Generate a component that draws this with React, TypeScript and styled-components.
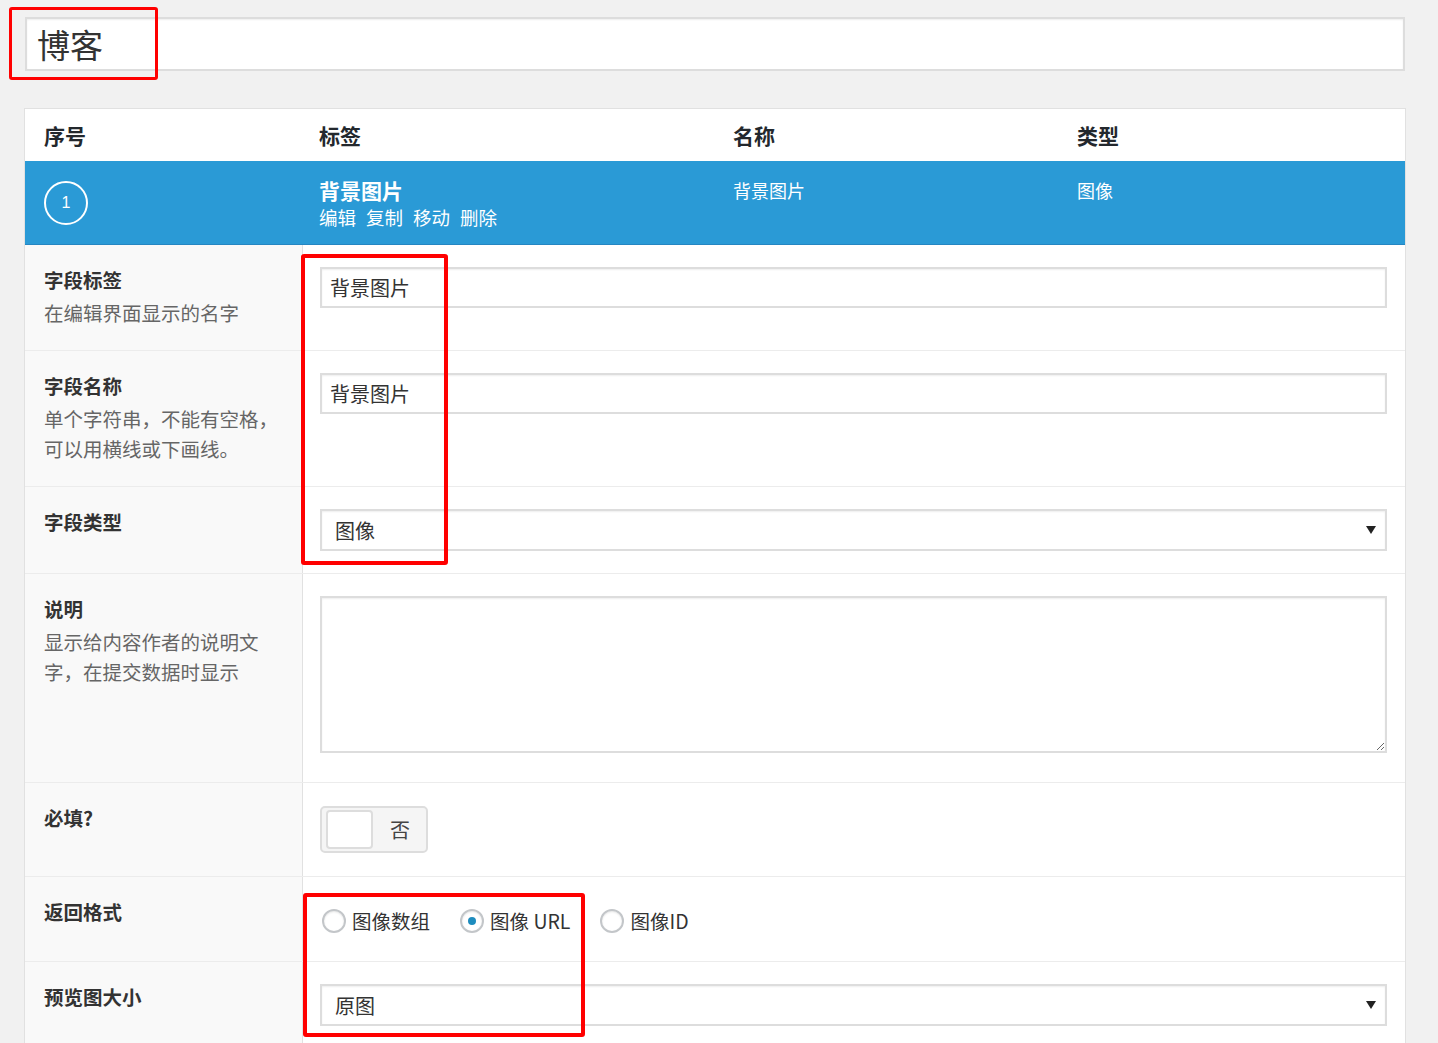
import React from 'react';
import styled, { createGlobalStyle } from 'styled-components';

interface FieldRowData {
	label: string;
	desc?: string[];
	control: React.ReactNode;
}

const GlobalStyle = createGlobalStyle`
	body {
		margin: 0;
		background: #f1f1f1;
		font-family: "Noto Sans CJK SC", "Noto Sans", sans-serif;
		color: #333;
	}
	* { box-sizing: border-box; }
`;

const Arrow = () => (
	<svg width="10" height="8" viewBox="0 0 10 8">
		<polygon points="0,0 10,0 5,8" fill="#222" />
	</svg>
);

const RadioOption: React.FC<{ label: string; checked?: boolean }> = ({ label, checked }) => (
	<RadioItem>
		<RadioCircle $checked={checked} />
		<span>{label}</span>
	</RadioItem>
);

const App: React.FC = () => {
	const rows: FieldRowData[] = [
		{
			label: '字段标签',
			desc: ['在编辑界面显示的名字'],
			control: <TextInput defaultValue="背景图片" />,
		},
		{
			label: '字段名称',
			desc: ['单个字符串，不能有空格，', '可以用横线或下画线。'],
			control: <TextInput defaultValue="背景图片" />,
		},
		{
			label: '字段类型',
			control: (
				<SelectBox>
					<span>图像</span>
					<Arrow />
				</SelectBox>
			),
		},
		{
			label: '说明',
			desc: ['显示给内容作者的说明文', '字，在提交数据时显示'],
			control: <TextArea />,
		},
		{
			label: '必填?',
			control: (
				<Toggle>
					<ToggleKnob />
					<ToggleText>否</ToggleText>
				</Toggle>
			),
		},
		{
			label: '返回格式',
			control: (
				<RadioList>
					<RadioOption label="图像数组" />
					<RadioOption label="图像 URL" checked />
					<RadioOption label="图像ID" />
				</RadioList>
			),
		},
		{
			label: '预览图大小',
			control: (
				<SelectBox>
					<span>原图</span>
					<Arrow />
				</SelectBox>
			),
		},
	];

	return (
		<Page>
			<GlobalStyle />
			<TitleBox>博客</TitleBox>
			<Table>
				<HeaderRow>
					<div>序号</div>
					<div>标签</div>
					<div>名称</div>
					<div>类型</div>
				</HeaderRow>
				<ActiveRow>
					<OrderCircle>1</OrderCircle>
					<div>
						<FieldTitle>背景图片</FieldTitle>
						<Actions>
							<span>编辑</span>
							<span>复制</span>
							<span>移动</span>
							<span>删除</span>
						</Actions>
					</div>
					<CellText>背景图片</CellText>
					<CellText>图像</CellText>
				</ActiveRow>
				{rows.map((row, i) => (
					<FieldRow key={i}>
						<LabelCell>
							<LabelTitle>{row.label}</LabelTitle>
							{row.desc && (
								<LabelDesc>
									{row.desc.map((line, j) => (
										<div key={j}>{line}</div>
									))}
								</LabelDesc>
							)}
						</LabelCell>
						<ValueCell>{row.control}</ValueCell>
					</FieldRow>
				))}
			</Table>
			<Highlight $left={9} $top={7} $width={149} $height={73} $border={3} />
			<Highlight $left={301} $top={254} $width={147} $height={311} $border={4} />
			<Highlight $left={303} $top={893} $width={282} $height={144} $border={4} />
		</Page>
	);
};

const Page = styled.div`
	position: relative;
	padding: 17px 32px 40px 24px;
`;

const TitleBox = styled.div`
	margin: 0 1px;
	height: 54px;
	display: flex;
	align-items: center;
	padding-left: 10px;
	background: #fff;
	border: 2px solid #ddd;
	box-shadow: inset 0 1px 2px rgba(0, 0, 0, 0.07);
	font-size: 33px;
	color: #333;
`;

const Table = styled.div`
	margin-top: 37px;
	background: #fff;
	border: 1px solid #e1e1e1;
`;

const columns = `275px 414px 344px 1fr`;

const HeaderRow = styled.div`
	display: grid;
	grid-template-columns: ${columns};
	align-items: center;
	height: 52px;
	padding-left: 19px;
	font-size: 21px;
	font-weight: 700;
	color: #23282d;
`;

const ActiveRow = styled.div`
	display: grid;
	grid-template-columns: ${columns};
	padding: 15px 0 14px 19px;
	background: #2a9ad6;
	border-bottom: 1px solid #2586c2;
	color: #fff;
`;

const OrderCircle = styled.div`
	align-self: center;
	width: 44px;
	height: 44px;
	border: 2px solid #fff;
	border-radius: 50%;
	display: flex;
	align-items: center;
	justify-content: center;
	font-size: 16px;
	font-family: "Liberation Sans", Arial, sans-serif;
`;

const FieldTitle = styled.div`
	font-size: 21px;
	font-weight: 700;
	line-height: 28px;
`;

const Actions = styled.div`
	display: flex;
	gap: 10px;
	font-size: 18.5px;
	line-height: 26px;
`;

const CellText = styled.div`
	font-size: 18px;
	line-height: 28px;
`;

const FieldRow = styled.div`
	display: grid;
	grid-template-columns: 278px 1fr;
	& + & {
		border-top: 1px solid #ececec;
	}
`;

const LabelCell = styled.div`
	background: #f9f9f9;
	border-right: 1px solid #e1e1e1;
	padding: 20px 10px 22px 19px;
`;

const LabelTitle = styled.div`
	font-size: 19.5px;
	font-weight: 700;
	line-height: 30px;
	color: #333;
	margin-bottom: 3px;
`;

const LabelDesc = styled.div`
	font-size: 19.5px;
	line-height: 30px;
	color: #666;
	white-space: nowrap;
`;

const ValueCell = styled.div`
	padding: 22px 18px 22px 17px;
`;

const TextInput = styled.input`
	display: block;
	width: 100%;
	height: 41px;
	padding: 0 8px;
	border: 2px solid #ddd;
	box-shadow: inset 0 1px 2px rgba(0, 0, 0, 0.07);
	font-family: inherit;
	font-size: 20px;
	color: #333;
	outline: none;
`;

const SelectBox = styled.div`
	display: flex;
	align-items: center;
	justify-content: space-between;
	height: 42px;
	padding: 0 9px 0 13px;
	border: 2px solid #ddd;
	box-shadow: inset 0 1px 2px rgba(0, 0, 0, 0.07);
	font-size: 20px;
	color: #333;
`;

const TextArea = styled.textarea`
	display: block;
	width: 100%;
	height: 157px;
	margin-bottom: 7px;
	border: 2px solid #ddd;
	box-shadow: inset 0 1px 2px rgba(0, 0, 0, 0.07);
	font-family: inherit;
	font-size: 20px;
	resize: vertical;
	outline: none;
`;

const Toggle = styled.div`
	display: flex;
	align-items: center;
	width: 108px;
	height: 47px;
	margin: 1px 0 1px;
	padding-left: 4px;
	background: #f5f5f5;
	border: 2px solid #ddd;
	border-radius: 5px;
`;

const ToggleKnob = styled.div`
	width: 47px;
	height: 39px;
	background: #fff;
	border: 2px solid #ddd;
	border-radius: 4px;
`;

const ToggleText = styled.span`
	margin-left: 17px;
	font-size: 20px;
	color: #444;
`;

const RadioList = styled.div`
	display: flex;
	align-items: center;
	gap: 30px;
	height: 35px;
	margin: 4px 0 1px;
	padding-left: 2px;
	font-size: 19.5px;
	color: #333;
`;

const RadioItem = styled.label`
	display: flex;
	align-items: center;
	gap: 6px;
`;

const RadioCircle = styled.span<{ $checked?: boolean }>`
	position: relative;
	width: 24px;
	height: 24px;
	border-radius: 50%;
	border: 2px solid #c3c6c9;
	background: #fff;
	box-shadow: inset 0 1px 2px rgba(0, 0, 0, 0.1);
	&::after {
		content: '';
		display: ${p => (p.$checked ? 'block' : 'none')};
		position: absolute;
		left: 50%;
		top: 50%;
		width: 8px;
		height: 8px;
		margin: -4px 0 0 -4px;
		border-radius: 50%;
		background: #1e8cbe;
	}
`;

const Highlight = styled.div<{ $left: number; $top: number; $width: number; $height: number; $border: number }>`
	position: absolute;
	left: ${p => p.$left}px;
	top: ${p => p.$top}px;
	width: ${p => p.$width}px;
	height: ${p => p.$height}px;
	border: ${p => p.$border}px solid #ff0000;
	border-radius: 3px;
	pointer-events: none;
`;

export default App;
